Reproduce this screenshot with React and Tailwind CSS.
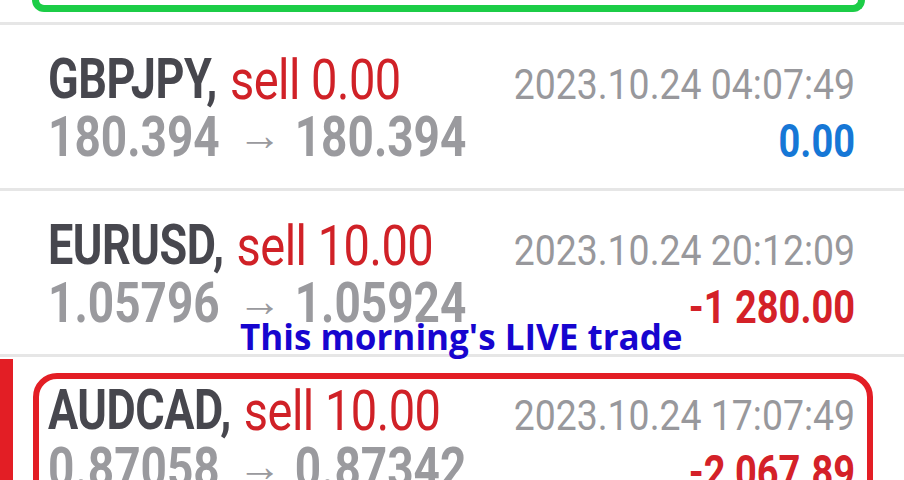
import React from "react";

const rows = [
  {
    symbol: "GBPJPY,",
    side: "sell 0.00",
    time: "2023.10.24 04:07:49",
    open: "180.394",
    close: "180.394",
    profit: "0.00",
    profitColor: "text-[#1677d6]",
  },
  {
    symbol: "EURUSD,",
    side: "sell 10.00",
    time: "2023.10.24 20:12:09",
    open: "1.05796",
    close: "1.05924",
    profit: "-1 280.00",
    profitColor: "text-[#d42128]",
  },
];

function Lines({ row }) {
  return (
    <>
      <div className="flex items-baseline justify-between">
        <div className="flex items-baseline">
          <span className="inline-block origin-bottom scale-y-[1.22] text-[45px] font-bold leading-none tracking-[-0.5px] text-[#47474e]">
            {row.symbol}
          </span>
          <span className="ml-[13px] inline-block origin-bottom scale-y-[1.18] text-[47px] leading-none tracking-[-0.5px] text-[#d02127]">
            {row.side}
          </span>
        </div>
        <span className="inline-block origin-bottom scale-y-[1.12] text-[37.4px] leading-none text-[#98989c]">
          {row.time}
        </span>
      </div>
      <div className="mt-[12px] flex items-baseline justify-between">
        <div className="flex items-baseline text-[#9a9a9e]">
          <span className="inline-block origin-bottom scale-y-[1.22] text-[46px] font-bold leading-none">
            {row.open}
          </span>
          <span className="ml-[18px] mr-[13px] inline-block -translate-y-[8px] text-[44px] leading-none">→</span>
          <span className="inline-block origin-bottom scale-y-[1.22] text-[46px] font-bold leading-none">
            {row.close}
          </span>
        </div>
        <span
          className={`inline-block origin-bottom scale-y-[1.22] text-[38px] font-bold leading-none ${row.profitColor}`}
        >
          {row.profit}
        </span>
      </div>
    </>
  );
}

export default function App() {
  return (
    <div className="relative h-[480px] w-[904px] overflow-hidden bg-white font-['Roboto',sans-serif]">
      <div className="ml-[32px] h-[12px] w-[833px] rounded-b-[22px] border-[7px] border-t-0 border-[#1ccd47]" />
      <div className="mt-[10px] h-[3px] bg-[#e6e6e6]" />

      {rows.map((row) => (
        <div key={row.symbol}>
          <div className="h-[163px] pl-[48px] pr-[49px] pt-[35px]">
            <Lines row={row} />
          </div>
          <div className="h-[3px] bg-[#e6e6e6]" />
        </div>
      ))}

      <div className="mt-[2px] flex h-[200px]">
        <div className="w-[13px] bg-[#e31e25]" />
        <div className="ml-[20px] mt-[14px] h-[200px] w-[840px] rounded-[24px] border-[6px] border-[#e31e25] pl-[9px] pr-[12px] pt-[12px]">
          <Lines
            row={{
              symbol: "AUDCAD,",
              side: "sell 10.00",
              time: "2023.10.24 17:07:49",
              open: "0.87058",
              close: "0.87342",
              profit: "-2 067.89",
              profitColor: "text-[#d42128]",
            }}
          />
        </div>
      </div>

      <div className="absolute left-[240px] top-[319px] font-['Open_Sans',sans-serif] text-[35px] font-bold leading-none text-[#1705cf]">
        This morning's LIVE trade
      </div>
    </div>
  );
}
